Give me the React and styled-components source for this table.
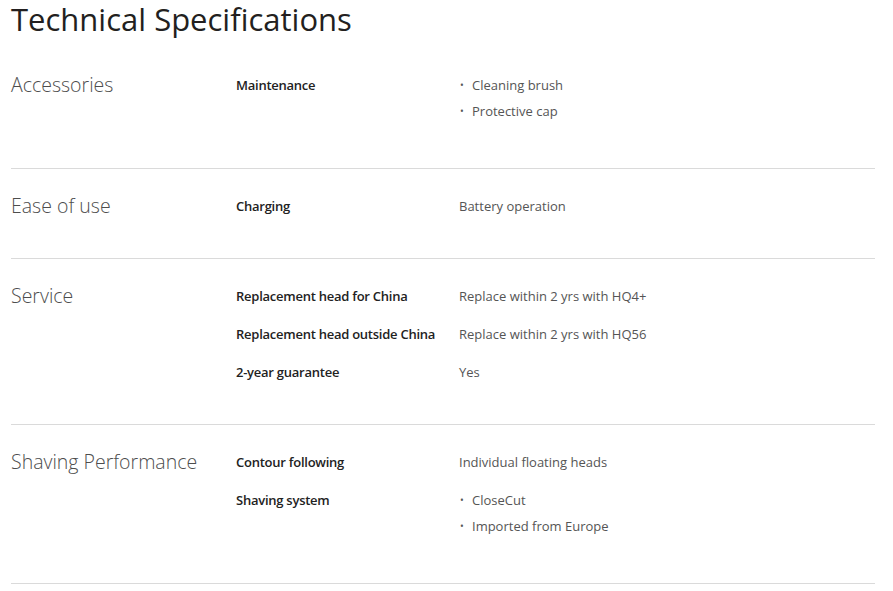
import React from "react";
import styled, { createGlobalStyle } from "styled-components";

const specs = [
  {
    group: "Accessories",
    rows: [{ label: "Maintenance", value: ["Cleaning brush", "Protective cap"] }],
  },
  {
    group: "Ease of use",
    rows: [{ label: "Charging", value: "Battery operation" }],
  },
  {
    group: "Service",
    rows: [
      { label: "Replacement head for China", value: "Replace within 2 yrs with HQ4+" },
      { label: "Replacement head outside China", value: "Replace within 2 yrs with HQ56" },
      { label: "2-year guarantee", value: "Yes" },
    ],
  },
  {
    group: "Shaving Performance",
    rows: [
      { label: "Contour following", value: "Individual floating heads" },
      { label: "Shaving system", value: ["CloseCut", "Imported from Europe"] },
    ],
  },
];

export default function App() {
  return (
    <Page>
      <GlobalStyle />
      <Title>Technical Specifications</Title>
      {specs.map((s) => (
        <Section key={s.group}>
          <Group>{s.group}</Group>
          <Rows>
            {s.rows.map((r) => (
              <Row key={r.label}>
                <Label>{r.label}</Label>
                {Array.isArray(r.value) ? (
                  <List>
                    {r.value.map((v) => (
                      <Item key={v}>{v}</Item>
                    ))}
                  </List>
                ) : (
                  <Value>{r.value}</Value>
                )}
              </Row>
            ))}
          </Rows>
        </Section>
      ))}
    </Page>
  );
}

const GlobalStyle = createGlobalStyle`
  body {
    margin: 0;
    background: #fff;
    font-family: "Open Sans", "Liberation Sans", sans-serif;
  }
`;

const Page = styled.div`
  width: 864px;
  padding: 0 0 0 11px;
`;

const Title = styled.h1`
  margin: 0;
  padding-top: 1px;
  font-size: 31px;
  line-height: 36px;
  font-weight: 400;
  color: #231f20;
`;

const Section = styled.div`
  display: grid;
  grid-template-columns: 225px 1fr;
  padding: 28px 0 43px;
  border-bottom: 1px solid #dadada;
  &:first-of-type {
    padding-top: 39px;
  }
`;

const Group = styled.h3`
  margin: 0;
  font-size: 19.5px;
  line-height: 18px;
  font-weight: 300;
  color: #4d4d4d;
`;

const Rows = styled.div`
  display: flex;
  flex-direction: column;
  gap: 20px;
`;

const Row = styled.div`
  display: grid;
  grid-template-columns: 223px 1fr;
  font-size: 13px;
  line-height: 18px;
`;

const Label = styled.div`
  font-weight: 600;
  letter-spacing: -0.25px;
  color: #222;
`;

const Value = styled.div`
  color: #555;
`;

const List = styled.ul`
  margin: 0 0 5px;
  padding: 0;
  list-style: none;
`;

const Item = styled.li`
  position: relative;
  padding-left: 13px;
  color: #555;
  & + & {
    margin-top: 8px;
  }
  &::before {
    content: "•";
    position: absolute;
    left: 1px;
    color: #555;
    font-size: 10px;
  }
`;
